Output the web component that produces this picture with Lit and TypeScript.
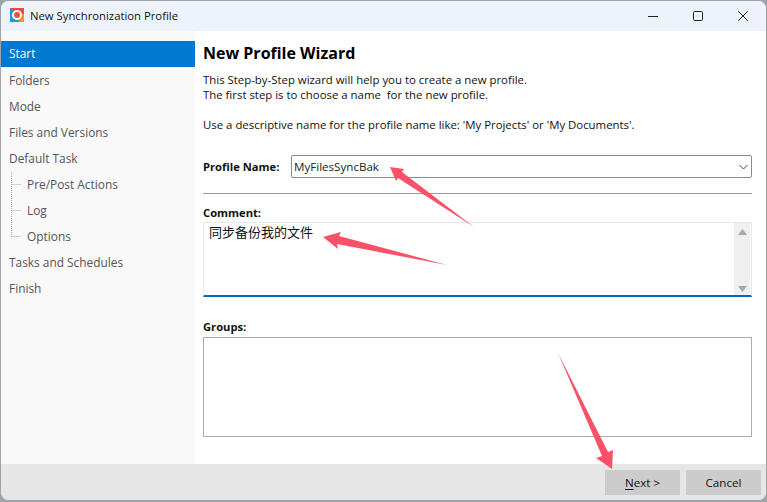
import { LitElement, html, css, svg } from "lit";
import { customElement } from "lit/decorators.js";

const NAV: { label: string; sub?: boolean; active?: boolean }[] = [
  { label: "Start", active: true },
  { label: "Folders" },
  { label: "Mode" },
  { label: "Files and Versions" },
  { label: "Default Task" },
  { label: "Pre/Post Actions", sub: true },
  { label: "Log", sub: true },
  { label: "Options", sub: true },
  { label: "Tasks and Schedules" },
  { label: "Finish" },
];

@customElement("app-root")
export class AppRoot extends LitElement {
  static styles = css`
    :host {
      display: block;
      width: 767px;
      height: 502px;
      position: relative;
      overflow: hidden;
      background: #a0a3a8;
      font-family: "Open Sans", "Noto Sans CJK SC", sans-serif;
      font-size: 12px;
      color: #000;
    }
    .window {
      box-sizing: border-box;
      width: 765px;
      height: 499px;
      margin: 1px 0 0 1px;
      border-radius: 8px;
      overflow: hidden;
      display: flex;
      flex-direction: column;
      background: #fff;
    }
    .titlebar {
      height: 30px;
      flex: none;
      background: #eef3fb;
      display: flex;
      align-items: center;
      padding: 0 1px 1px 9px;
      box-sizing: border-box;
    }
    .logo { width: 14px; height: 14px; margin: 0 6px 1px 0; flex: none; }
    .title { font-size: 11.3px; color: #111; flex: 1; }
    .ctrl { width: 45px; height: 29px; display: flex; align-items: center; justify-content: center; flex: none; }
    .ctrl svg { width: 12px; height: 12px; }
    .middle { flex: 1; display: flex; min-height: 0; }
    .side {
      width: 194px;
      flex: none;
      background: #f9f9f9;
      padding-top: 10px;
      box-sizing: border-box;
      position: relative;
    }
    .item {
      height: 26px;
      line-height: 26px;
      padding-left: 8px;
      color: #555;
      font-size: 11.9px;
      white-space: nowrap;
    }
    .item.sub { padding-left: 26px; }
    .item.active { background: #0078d0; color: #fff; line-height: 25px; }
    .tree { position: absolute; left: 10px; top: 141px; width: 11px; height: 66px; pointer-events: none; }
    .main {
      flex: 1;
      padding: 11px 14px 0 8px;
      box-sizing: border-box;
      display: flex;
      flex-direction: column;
      min-width: 0;
    }
    h1 { margin: 0 0 8px; font-size: 16px; line-height: 22px; font-weight: 700; color: #000; }
    .intro { line-height: 15px; font-size: 11.4px; color: #111; }
    .intro p { margin: 0; white-space: pre; }
    .intro p + p { margin-top: 15px; }
    .name-row { display: flex; align-items: center; margin-top: 23px; }
    .name-row label { width: 88px; flex: none; }
    label { font-weight: 700; font-size: 11.2px; color: #111; white-space: nowrap; }
    .combo {
      flex: 1;
      height: 23px;
      box-sizing: border-box;
      border: 1px solid #8a8a8a;
      border-radius: 2px;
      display: flex;
      align-items: center;
      padding: 0 3px 1px 2px;
      justify-content: space-between;
      font-size: 11.6px;
      color: #222;
    }
    .combo svg { width: 9px; height: 6px; margin: 2px 0 0; }
    hr { border: 0; height: 1px; background: #9a9a9a; margin: 15px 0 0; }
    .lbl { margin-top: 11px; line-height: 16px; display: block; }
    .comment {
      height: 75px;
      box-sizing: border-box;
      margin-top: 1px;
      border: 1px solid #e8e8e8;
      border-bottom: 2px solid #0067c0;
      display: flex;
      justify-content: space-between;
    }
    .comment-text { padding: 0 0 0 5px; font-size: 13px; line-height: 18px; color: #111; }
    .scroll {
      width: 16px;
      background: #efefef;
      margin-right: 1px;
      display: flex;
      flex-direction: column;
      justify-content: space-between;
      align-items: center;
      padding: 6px 0 3px;
    }
    .scroll svg { width: 9px; height: 6px; }
    .groups-lbl { margin-top: 22px; }
    .groups { height: 100px; box-sizing: border-box; border: 1px solid #ababab; margin-top: 2px; }
    .footer {
      height: 36px;
      flex: none;
      background: #e6e6e6;
      display: flex;
      justify-content: flex-end;
      gap: 6px;
      padding: 6px 5px 0 0;
      box-sizing: border-box;
    }
    .btn {
      width: 75px;
      height: 25px;
      background: #ccc;
      text-align: center;
      line-height: 25px;
      font-size: 11.6px;
      color: #111;
    }
    .btn u { text-underline-offset: 2px; }
    .arrows { position: absolute; inset: 0; width: 767px; height: 502px; pointer-events: none; }
  `;

  render() {
    return html`
      <div class="window">
        <div class="titlebar">
          <svg class="logo" viewBox="0 0 14 14">
            <rect width="14" height="14" fill="#ee4b38" />
            <polygon points="0,0 7,7 9,14 0,14" fill="#1e96f0" />
            <polygon points="14,6 14,14 9,14 7,7" fill="#f6931e" />
            <circle cx="7" cy="7" r="5" fill="#fff" />
            <circle cx="7" cy="7" r="2.9" fill="#ee4b38" />
          </svg>
          <span class="title">New Synchronization Profile</span>
          <div class="ctrl">
            <svg viewBox="0 0 12 12"><path d="M1 6.5H11" stroke="#222" stroke-width="1" fill="none" /></svg>
          </div>
          <div class="ctrl">
            <svg viewBox="0 0 12 12"><rect x="1.5" y="1.5" width="9" height="9" rx="1.2" stroke="#222" stroke-width="1" fill="none" /></svg>
          </div>
          <div class="ctrl">
            <svg viewBox="0 0 12 12"><path d="M1.2 1.2L10.8 10.8M10.8 1.2L1.2 10.8" stroke="#222" stroke-width="1" fill="none" /></svg>
          </div>
        </div>
        <div class="middle">
          <div class="side">
            ${NAV.map(
              (n) => html`<div class="item ${n.sub ? "sub" : ""} ${n.active ? "active" : ""}">${n.label}</div>`
            )}
            <svg class="tree" viewBox="0 0 11 66">
              <path
                d="M.5 0V65M.5 12.5H10M.5 38.5H10M.5 64.5H10"
                stroke="#aaa"
                stroke-width="1"
                stroke-dasharray="1 1"
                fill="none"
              />
            </svg>
          </div>
          <div class="main">
            <h1>New Profile Wizard</h1>
            <div class="intro">
              <p>This Step-by-Step wizard will help you to create a new profile.
The first step is to choose a name  for the new profile.</p>
              <p>Use a descriptive name for the profile name like: 'My Projects' or 'My Documents'.</p>
            </div>
            <div class="name-row">
              <label>Profile Name:</label>
              <div class="combo">
                <span>MyFilesSyncBak</span>
                <svg viewBox="0 0 9 6"><path d="M.5 1L4.5 5L8.5 1" stroke="#444" stroke-width="1" fill="none" /></svg>
              </div>
            </div>
            <hr />
            <label class="lbl">Comment:</label>
            <div class="comment">
              <div class="comment-text">同步备份我的文件</div>
              <div class="scroll">
                <svg viewBox="0 0 9 6"><path d="M4.5 0L9 6H0Z" fill="#a8a8a8" /></svg>
                <svg viewBox="0 0 9 6"><path d="M0 0H9L4.5 6Z" fill="#a8a8a8" /></svg>
              </div>
            </div>
            <label class="lbl groups-lbl">Groups:</label>
            <div class="groups"></div>
          </div>
        </div>
        <div class="footer">
          <div class="btn"><u>N</u>ext &gt;</div>
          <div class="btn">Cancel</div>
        </div>
      </div>
      <svg class="arrows" viewBox="0 0 767 502">
        ${svg`
          <polygon fill="#fb5168" points="390,167 404,169 402,172 474,227 398,178 396,181" />
          <polygon fill="#fb5168" points="323,237 341,232 339,236 447,265 337,244 338,249" />
          <polygon fill="#fb5168" points="612,469 596,458 602,456 558,353 608,452 613,450" />
        `}
      </svg>
    `;
  }
}
